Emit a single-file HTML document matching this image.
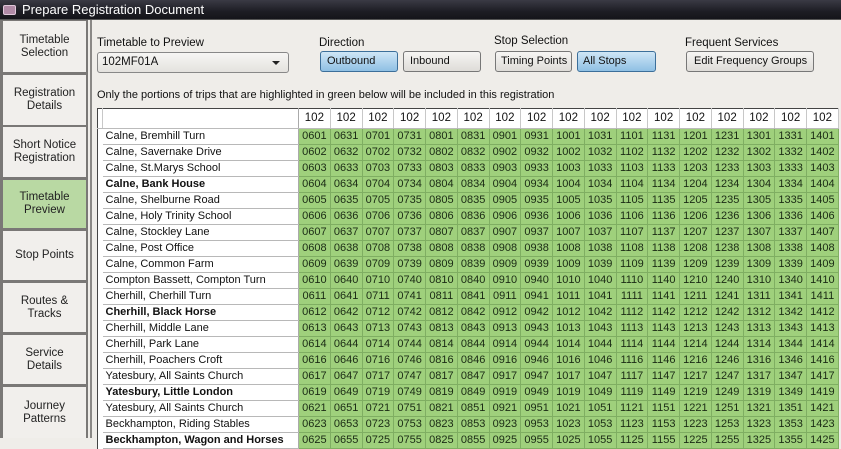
<!DOCTYPE html>
<html><head><meta charset="utf-8">
<style>
*{margin:0;padding:0;box-sizing:border-box}
body{width:841px;height:438px;overflow:hidden;background:#efede9;font-family:"Liberation Sans",sans-serif;position:relative;color:#111}
.title{position:absolute;left:0;top:0;width:841px;height:20px;background:linear-gradient(#3a3a44,#1d1d24 60%,#15151a);color:#fff;font-size:13px;line-height:20px;padding-left:22px;border-bottom:1px solid #555}
.ico{position:absolute;left:3px;top:5px;width:13px;height:10px;background:#b08aa6;border:1px solid #e0c8da;border-radius:2px}
.nav{position:absolute;left:0;top:20px;width:88px;height:418px;background:#7a7876}
.nb{position:absolute;left:3px;width:83px;background:#f1efec;display:flex;align-items:center;justify-content:center;text-align:center;font-size:11.5px;line-height:13px;color:#222}
.nb.sel{background:#b9d9a3}
.vline{position:absolute;left:90px;top:20px;width:2px;height:418px;background:#8a8886}
.lbl{position:absolute;font-size:11.5px;color:#111;white-space:nowrap}
.btn{position:absolute;height:21px;border:1px solid #777;border-radius:3px;background:linear-gradient(#f6f5f3,#dedcd8);font-size:11px;line-height:19px;padding-left:6px;color:#111;white-space:nowrap;overflow:hidden}
.btn.on{background:linear-gradient(#cfe6f6,#8fc0e4);border-color:#3c6f9a}
.combo{position:absolute;left:97px;top:52px;width:192px;height:21px;border:1px solid #888;border-radius:3px;background:linear-gradient(#f7f6f4,#e4e2de);font-size:11.5px;line-height:19px;padding-left:4px}
.combo:after{content:"";position:absolute;right:8px;top:8px;border-left:4px solid transparent;border-right:4px solid transparent;border-top:4px solid #222}
table{position:absolute;left:97px;top:108px;border-collapse:collapse;table-layout:fixed;width:741px;font-size:11px;border-left:1px solid #444;border-top:1px solid #444}
td{height:16px;padding:0;white-space:nowrap;overflow:hidden;line-height:15px}
tr.h td{height:20px;background:#fff;text-align:center;border-right:1px solid #c8c8c8;border-bottom:1px solid #bbb;font-size:11.5px}
td.rh{background:#fff;border-bottom:none}
td.n{background:#fff;border-bottom:1px solid #b8b8b8;padding-left:3px;font-size:11px;border-right:1px solid #aaa}
td.t{background:#9fd07c;border-right:1px solid #7fae62;border-bottom:1px solid #7fae62;text-align:center;color:#1a2a14}
b{font-weight:bold}
</style></head><body>
<div class="title"><div class="ico"></div>Prepare Registration Document</div>
<div class="nav">
<div class="nb" style="top:1px;height:51px">Timetable<br>Selection</div>
<div class="nb" style="top:55px;height:50px">Registration<br>Details</div>
<div class="nb" style="top:107px;height:50px">Short Notice<br>Registration</div>
<div class="nb sel" style="top:160px;height:48px">Timetable<br>Preview</div>
<div class="nb" style="top:211px;height:49px">Stop Points</div>
<div class="nb" style="top:263px;height:49px">Routes &amp;<br>Tracks</div>
<div class="nb" style="top:315px;height:49px">Service<br>Details</div>
<div class="nb" style="top:367px;height:51px">Journey<br>Patterns</div>
</div>
<div class="vline"></div>
<div class="lbl" style="left:97px;top:37px">Timetable to Preview</div>
<div class="combo">102MF01A</div>
<div class="lbl" style="left:319px;top:37px">Direction</div>
<div class="btn on" style="left:320px;top:51px;width:78px">Outbound</div>
<div class="btn" style="left:403px;top:51px;width:78px">Inbound</div>
<div class="lbl" style="left:494px;top:35px">Stop Selection</div>
<div class="btn" style="left:495px;top:51px;width:77px;padding-left:5px">Timing Points</div>
<div class="btn on" style="left:577px;top:51px;width:79px;padding-left:5px">All Stops</div>
<div class="lbl" style="left:685px;top:37px">Frequent Services</div>
<div class="btn" style="left:686px;top:51px;width:128px;padding-left:7px">Edit Frequency Groups</div>
<div class="lbl" style="left:97px;top:89px;font-size:11px">Only the portions of trips that are highlighted in green below will be included in this registration</div>
<table>
<colgroup><col style="width:5px"><col style="width:196px"><col span="17" style="width:31.76px"></colgroup>
<tr class="h"><td class="rh"></td><td style="border-right:1px solid #aaa"></td><td>102</td><td>102</td><td>102</td><td>102</td><td>102</td><td>102</td><td>102</td><td>102</td><td>102</td><td>102</td><td>102</td><td>102</td><td>102</td><td>102</td><td>102</td><td>102</td><td>102</td></tr>
<tr><td class="rh"></td><td class="n">Calne, Bremhill Turn</td><td class="t">0601</td><td class="t">0631</td><td class="t">0701</td><td class="t">0731</td><td class="t">0801</td><td class="t">0831</td><td class="t">0901</td><td class="t">0931</td><td class="t">1001</td><td class="t">1031</td><td class="t">1101</td><td class="t">1131</td><td class="t">1201</td><td class="t">1231</td><td class="t">1301</td><td class="t">1331</td><td class="t">1401</td></tr>
<tr><td class="rh"></td><td class="n">Calne, Savernake Drive</td><td class="t">0602</td><td class="t">0632</td><td class="t">0702</td><td class="t">0732</td><td class="t">0802</td><td class="t">0832</td><td class="t">0902</td><td class="t">0932</td><td class="t">1002</td><td class="t">1032</td><td class="t">1102</td><td class="t">1132</td><td class="t">1202</td><td class="t">1232</td><td class="t">1302</td><td class="t">1332</td><td class="t">1402</td></tr>
<tr><td class="rh"></td><td class="n">Calne, St.Marys School</td><td class="t">0603</td><td class="t">0633</td><td class="t">0703</td><td class="t">0733</td><td class="t">0803</td><td class="t">0833</td><td class="t">0903</td><td class="t">0933</td><td class="t">1003</td><td class="t">1033</td><td class="t">1103</td><td class="t">1133</td><td class="t">1203</td><td class="t">1233</td><td class="t">1303</td><td class="t">1333</td><td class="t">1403</td></tr>
<tr><td class="rh"></td><td class="n"><b>Calne, Bank House</b></td><td class="t">0604</td><td class="t">0634</td><td class="t">0704</td><td class="t">0734</td><td class="t">0804</td><td class="t">0834</td><td class="t">0904</td><td class="t">0934</td><td class="t">1004</td><td class="t">1034</td><td class="t">1104</td><td class="t">1134</td><td class="t">1204</td><td class="t">1234</td><td class="t">1304</td><td class="t">1334</td><td class="t">1404</td></tr>
<tr><td class="rh"></td><td class="n">Calne, Shelburne Road</td><td class="t">0605</td><td class="t">0635</td><td class="t">0705</td><td class="t">0735</td><td class="t">0805</td><td class="t">0835</td><td class="t">0905</td><td class="t">0935</td><td class="t">1005</td><td class="t">1035</td><td class="t">1105</td><td class="t">1135</td><td class="t">1205</td><td class="t">1235</td><td class="t">1305</td><td class="t">1335</td><td class="t">1405</td></tr>
<tr><td class="rh"></td><td class="n">Calne, Holy Trinity School</td><td class="t">0606</td><td class="t">0636</td><td class="t">0706</td><td class="t">0736</td><td class="t">0806</td><td class="t">0836</td><td class="t">0906</td><td class="t">0936</td><td class="t">1006</td><td class="t">1036</td><td class="t">1106</td><td class="t">1136</td><td class="t">1206</td><td class="t">1236</td><td class="t">1306</td><td class="t">1336</td><td class="t">1406</td></tr>
<tr><td class="rh"></td><td class="n">Calne, Stockley Lane</td><td class="t">0607</td><td class="t">0637</td><td class="t">0707</td><td class="t">0737</td><td class="t">0807</td><td class="t">0837</td><td class="t">0907</td><td class="t">0937</td><td class="t">1007</td><td class="t">1037</td><td class="t">1107</td><td class="t">1137</td><td class="t">1207</td><td class="t">1237</td><td class="t">1307</td><td class="t">1337</td><td class="t">1407</td></tr>
<tr><td class="rh"></td><td class="n">Calne, Post Office</td><td class="t">0608</td><td class="t">0638</td><td class="t">0708</td><td class="t">0738</td><td class="t">0808</td><td class="t">0838</td><td class="t">0908</td><td class="t">0938</td><td class="t">1008</td><td class="t">1038</td><td class="t">1108</td><td class="t">1138</td><td class="t">1208</td><td class="t">1238</td><td class="t">1308</td><td class="t">1338</td><td class="t">1408</td></tr>
<tr><td class="rh"></td><td class="n">Calne, Common Farm</td><td class="t">0609</td><td class="t">0639</td><td class="t">0709</td><td class="t">0739</td><td class="t">0809</td><td class="t">0839</td><td class="t">0909</td><td class="t">0939</td><td class="t">1009</td><td class="t">1039</td><td class="t">1109</td><td class="t">1139</td><td class="t">1209</td><td class="t">1239</td><td class="t">1309</td><td class="t">1339</td><td class="t">1409</td></tr>
<tr><td class="rh"></td><td class="n">Compton Bassett, Compton Turn</td><td class="t">0610</td><td class="t">0640</td><td class="t">0710</td><td class="t">0740</td><td class="t">0810</td><td class="t">0840</td><td class="t">0910</td><td class="t">0940</td><td class="t">1010</td><td class="t">1040</td><td class="t">1110</td><td class="t">1140</td><td class="t">1210</td><td class="t">1240</td><td class="t">1310</td><td class="t">1340</td><td class="t">1410</td></tr>
<tr><td class="rh"></td><td class="n">Cherhill, Cherhill Turn</td><td class="t">0611</td><td class="t">0641</td><td class="t">0711</td><td class="t">0741</td><td class="t">0811</td><td class="t">0841</td><td class="t">0911</td><td class="t">0941</td><td class="t">1011</td><td class="t">1041</td><td class="t">1111</td><td class="t">1141</td><td class="t">1211</td><td class="t">1241</td><td class="t">1311</td><td class="t">1341</td><td class="t">1411</td></tr>
<tr><td class="rh"></td><td class="n"><b>Cherhill, Black Horse</b></td><td class="t">0612</td><td class="t">0642</td><td class="t">0712</td><td class="t">0742</td><td class="t">0812</td><td class="t">0842</td><td class="t">0912</td><td class="t">0942</td><td class="t">1012</td><td class="t">1042</td><td class="t">1112</td><td class="t">1142</td><td class="t">1212</td><td class="t">1242</td><td class="t">1312</td><td class="t">1342</td><td class="t">1412</td></tr>
<tr><td class="rh"></td><td class="n">Cherhill, Middle Lane</td><td class="t">0613</td><td class="t">0643</td><td class="t">0713</td><td class="t">0743</td><td class="t">0813</td><td class="t">0843</td><td class="t">0913</td><td class="t">0943</td><td class="t">1013</td><td class="t">1043</td><td class="t">1113</td><td class="t">1143</td><td class="t">1213</td><td class="t">1243</td><td class="t">1313</td><td class="t">1343</td><td class="t">1413</td></tr>
<tr><td class="rh"></td><td class="n">Cherhill, Park Lane</td><td class="t">0614</td><td class="t">0644</td><td class="t">0714</td><td class="t">0744</td><td class="t">0814</td><td class="t">0844</td><td class="t">0914</td><td class="t">0944</td><td class="t">1014</td><td class="t">1044</td><td class="t">1114</td><td class="t">1144</td><td class="t">1214</td><td class="t">1244</td><td class="t">1314</td><td class="t">1344</td><td class="t">1414</td></tr>
<tr><td class="rh"></td><td class="n">Cherhill, Poachers Croft</td><td class="t">0616</td><td class="t">0646</td><td class="t">0716</td><td class="t">0746</td><td class="t">0816</td><td class="t">0846</td><td class="t">0916</td><td class="t">0946</td><td class="t">1016</td><td class="t">1046</td><td class="t">1116</td><td class="t">1146</td><td class="t">1216</td><td class="t">1246</td><td class="t">1316</td><td class="t">1346</td><td class="t">1416</td></tr>
<tr><td class="rh"></td><td class="n">Yatesbury, All Saints Church</td><td class="t">0617</td><td class="t">0647</td><td class="t">0717</td><td class="t">0747</td><td class="t">0817</td><td class="t">0847</td><td class="t">0917</td><td class="t">0947</td><td class="t">1017</td><td class="t">1047</td><td class="t">1117</td><td class="t">1147</td><td class="t">1217</td><td class="t">1247</td><td class="t">1317</td><td class="t">1347</td><td class="t">1417</td></tr>
<tr><td class="rh"></td><td class="n"><b>Yatesbury, Little London</b></td><td class="t">0619</td><td class="t">0649</td><td class="t">0719</td><td class="t">0749</td><td class="t">0819</td><td class="t">0849</td><td class="t">0919</td><td class="t">0949</td><td class="t">1019</td><td class="t">1049</td><td class="t">1119</td><td class="t">1149</td><td class="t">1219</td><td class="t">1249</td><td class="t">1319</td><td class="t">1349</td><td class="t">1419</td></tr>
<tr><td class="rh"></td><td class="n">Yatesbury, All Saints Church</td><td class="t">0621</td><td class="t">0651</td><td class="t">0721</td><td class="t">0751</td><td class="t">0821</td><td class="t">0851</td><td class="t">0921</td><td class="t">0951</td><td class="t">1021</td><td class="t">1051</td><td class="t">1121</td><td class="t">1151</td><td class="t">1221</td><td class="t">1251</td><td class="t">1321</td><td class="t">1351</td><td class="t">1421</td></tr>
<tr><td class="rh"></td><td class="n">Beckhampton, Riding Stables</td><td class="t">0623</td><td class="t">0653</td><td class="t">0723</td><td class="t">0753</td><td class="t">0823</td><td class="t">0853</td><td class="t">0923</td><td class="t">0953</td><td class="t">1023</td><td class="t">1053</td><td class="t">1123</td><td class="t">1153</td><td class="t">1223</td><td class="t">1253</td><td class="t">1323</td><td class="t">1353</td><td class="t">1423</td></tr>
<tr><td class="rh"></td><td class="n"><b>Beckhampton, Wagon and Horses</b></td><td class="t">0625</td><td class="t">0655</td><td class="t">0725</td><td class="t">0755</td><td class="t">0825</td><td class="t">0855</td><td class="t">0925</td><td class="t">0955</td><td class="t">1025</td><td class="t">1055</td><td class="t">1125</td><td class="t">1155</td><td class="t">1225</td><td class="t">1255</td><td class="t">1325</td><td class="t">1355</td><td class="t">1425</td></tr>
</table>
</body></html>
